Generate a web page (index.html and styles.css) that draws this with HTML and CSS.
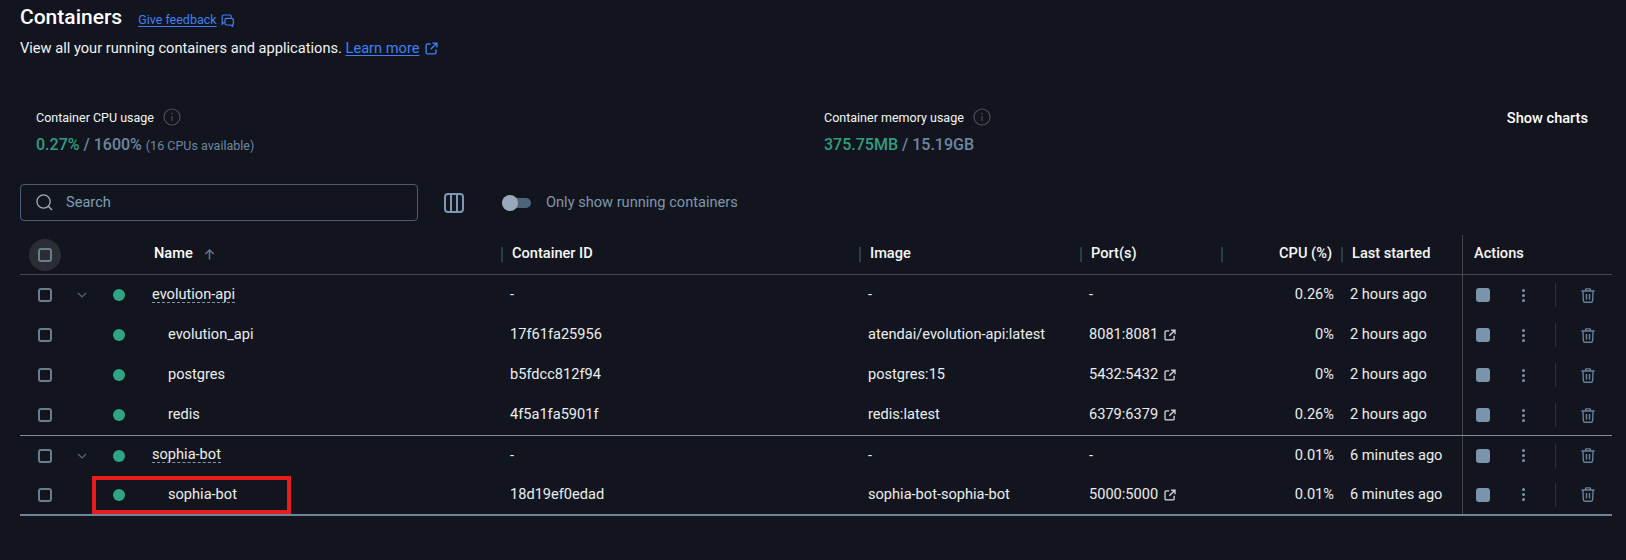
FILE: index.html
```html
<!DOCTYPE html>
<html lang="en">
<head>
<meta charset="utf-8">
<title>Containers</title>
<link rel="stylesheet" href="styles.css">
</head>
<body>
<svg class="defs" aria-hidden="true">
  <symbol id="ext" viewBox="0 0 14 14"><path d="M6 2.200H2.600A1.400 1.400 0 0 0 1.200 3.600v7.800a1.400 1.400 0 0 0 1.400 1.400h7.800a1.400 1.400 0 0 0 1.400-1.400V8M8 1.200h4.800V6M12.600 1.400 6.200 7.800" fill="none" stroke="currentColor" stroke-width="1.500"/></symbol>
  <symbol id="trash" viewBox="0 0 14 15"><path d="M.5 3h13M4.600 3V1.600c0-.4.3-.7.7-.7h3.400c.4 0 .7.3.7.7V3M1.900 3l.5 9.800c0 .8.6 1.400 1.400 1.400h6.400c.8 0 1.400-.6 1.400-1.400l.5-9.800M5.500 6v5.400M8.500 6v5.400" fill="none" stroke="currentColor" stroke-width="1.400"/></symbol>
  <symbol id="chev" viewBox="0 0 10 6"><path d="M1 1l4 4 4-4" fill="none" stroke="currentColor" stroke-width="1.200"/></symbol>
  <symbol id="info" viewBox="0 0 18 18"><circle cx="9" cy="9" r="8" fill="none" stroke="currentColor" stroke-width="1.200"/><path d="M9 8v5" stroke="currentColor" stroke-width="1.200"/><circle cx="9" cy="5.600" r=".8" fill="currentColor"/></symbol>
</svg>

<main class="page">
  <header class="title-row">
    <h1 class="title">Containers</h1>
    <a class="feedback link" href="#">Give feedback</a>
    <svg class="feedback-icon" viewBox="0 0 13 13"><path d="M3.500 8.500H2.700L1.200 10V2.500A1.500 1.500 0 0 1 2.700 1h6A1.500 1.500 0 0 1 10.200 2.500V3.800" fill="none" stroke="currentColor" stroke-width="1.200"/><path d="M5.500 4.300h5.300a1.500 1.500 0 0 1 1.500 1.500v3.700a1.500 1.500 0 0 1-.6 1.200v1.800l-1.800-1.500H5.500A1.500 1.500 0 0 1 4 9.500V5.800a1.500 1.500 0 0 1 1.500-1.500z" fill="none" stroke="currentColor" stroke-width="1.200"/></svg>
  </header>
  <p class="subtitle">View all your running containers and applications. <a class="link" href="#">Learn more</a><svg class="learn-icon"><use href="#ext"/></svg></p>

  <section class="stats">
    <div class="stat">
      <div class="stat-label">Container CPU usage<svg class="info"><use href="#info"/></svg></div>
      <div class="stat-value"><span class="green">0.27%</span> / 1600% <small class="stat-note">(16 CPUs available)</small></div>
    </div>
    <div class="stat">
      <div class="stat-label">Container memory usage<svg class="info"><use href="#info"/></svg></div>
      <div class="stat-value"><span class="green">375.75MB</span> / 15.19GB</div>
    </div>
    <button class="show-charts">Show charts</button>
  </section>

  <section class="toolbar">
    <label class="search">
      <svg class="search-icon" viewBox="0 0 18 18"><circle cx="8" cy="8" r="7" fill="none" stroke="currentColor" stroke-width="1.400"/><path d="M13 13l4 4" stroke="currentColor" stroke-width="1.400" fill="none"/></svg>
      <span class="search-text">Search</span>
    </label>
    <svg class="columns-icon" viewBox="0 0 20 20"><rect x="1" y="1" width="18" height="18" rx="3" fill="none" stroke="currentColor" stroke-width="2"/><path d="M7 1v18M13 1v18" stroke="currentColor" stroke-width="2"/></svg>
    <span class="toggle"><span class="thumb"></span></span>
    <span class="toggle-label">Only show running containers</span>
  </section>

  <section class="table">
    <div class="row head">
      <div class="cell"><span class="head-check"><span class="check"></span></span></div>
      <div class="cell"></div>
      <div class="cell"></div>
      <div class="cell name-head">Name<svg class="sort" viewBox="0 0 12 12"><path d="M6 11.500V1M1.500 5.500 6 1l4.500 4.500" fill="none" stroke="currentColor" stroke-width="1.600"/></svg></div>
      <div class="cell hcell"><i class="sep"></i>Container ID</div>
      <div class="cell hcell"><i class="sep"></i>Image</div>
      <div class="cell hcell"><i class="sep"></i>Port(s)</div>
      <div class="cell hcell"><i class="sep"></i><span class="cpu-title">CPU (%)</span></div>
      <div class="cell hcell"><i class="sep"></i>Last started</div>
      <div class="cell actions actions-head">Actions</div>
    </div>

    <div class="row">
      <div class="cell"><span class="check"></span></div>
      <div class="cell"><svg class="chev"><use href="#chev"/></svg></div>
      <div class="cell"><span class="dot"></span></div>
      <div class="cell name group"><span class="dashed">evolution-api</span></div>
      <div class="cell text">-</div>
      <div class="cell text">-</div>
      <div class="cell text">-</div>
      <div class="cell cpu">0.26%</div>
      <div class="cell started">2 hours ago</div>
      <div class="cell actions"><span class="stop"></span><span class="kebab"><i></i><i></i><i></i></span><span class="act-sep"></span><svg class="trash"><use href="#trash"/></svg></div>
    </div>

    <div class="row">
      <div class="cell"><span class="check"></span></div>
      <div class="cell"></div>
      <div class="cell"><span class="dot"></span></div>
      <div class="cell name">evolution_api</div>
      <div class="cell text">17f61fa25956</div>
      <div class="cell text">atendai/evolution-api:latest</div>
      <div class="cell text">8081:8081<svg class="port-icon"><use href="#ext"/></svg></div>
      <div class="cell cpu">0%</div>
      <div class="cell started">2 hours ago</div>
      <div class="cell actions"><span class="stop"></span><span class="kebab"><i></i><i></i><i></i></span><span class="act-sep"></span><svg class="trash"><use href="#trash"/></svg></div>
    </div>

    <div class="row">
      <div class="cell"><span class="check"></span></div>
      <div class="cell"></div>
      <div class="cell"><span class="dot"></span></div>
      <div class="cell name">postgres</div>
      <div class="cell text">b5fdcc812f94</div>
      <div class="cell text">postgres:15</div>
      <div class="cell text">5432:5432<svg class="port-icon"><use href="#ext"/></svg></div>
      <div class="cell cpu">0%</div>
      <div class="cell started">2 hours ago</div>
      <div class="cell actions"><span class="stop"></span><span class="kebab"><i></i><i></i><i></i></span><span class="act-sep"></span><svg class="trash"><use href="#trash"/></svg></div>
    </div>

    <div class="row group-end">
      <div class="cell"><span class="check"></span></div>
      <div class="cell"></div>
      <div class="cell"><span class="dot"></span></div>
      <div class="cell name">redis</div>
      <div class="cell text">4f5a1fa5901f</div>
      <div class="cell text">redis:latest</div>
      <div class="cell text">6379:6379<svg class="port-icon"><use href="#ext"/></svg></div>
      <div class="cell cpu">0.26%</div>
      <div class="cell started">2 hours ago</div>
      <div class="cell actions"><span class="stop"></span><span class="kebab"><i></i><i></i><i></i></span><span class="act-sep"></span><svg class="trash"><use href="#trash"/></svg></div>
    </div>

    <div class="row short">
      <div class="cell"><span class="check"></span></div>
      <div class="cell"><svg class="chev"><use href="#chev"/></svg></div>
      <div class="cell"><span class="dot"></span></div>
      <div class="cell name group"><span class="dashed">sophia-bot</span></div>
      <div class="cell text">-</div>
      <div class="cell text">-</div>
      <div class="cell text">-</div>
      <div class="cell cpu">0.01%</div>
      <div class="cell started">6 minutes ago</div>
      <div class="cell actions"><span class="stop"></span><span class="kebab"><i></i><i></i><i></i></span><span class="act-sep"></span><svg class="trash"><use href="#trash"/></svg></div>
    </div>

    <div class="row last">
      <div class="cell"><span class="check"></span></div>
      <div class="cell"></div>
      <div class="cell"><span class="dot"></span></div>
      <div class="cell name">sophia-bot</div>
      <div class="cell text">18d19ef0edad</div>
      <div class="cell text">sophia-bot-sophia-bot</div>
      <div class="cell text">5000:5000<svg class="port-icon"><use href="#ext"/></svg></div>
      <div class="cell cpu">0.01%</div>
      <div class="cell started">6 minutes ago</div>
      <div class="cell actions"><span class="stop"></span><span class="kebab"><i></i><i></i><i></i></span><span class="act-sep"></span><svg class="trash"><use href="#trash"/></svg></div>
    </div>

    <div class="highlight"></div>
  </section>
</main>
</body>
</html>
```
FILE: styles.css
```css
* { box-sizing: border-box; }
html, body { margin: 0; height: 100%; }
body {
  background: #12151d;
  color: #eceef0;
  font-family: Roboto, "Liberation Sans", sans-serif;
  font-size: 14.600px;
  overflow: hidden;
}
.defs { width: 0; height: 0; position: absolute; }
.page { width: 1626px; height: 560px; padding: 0 38px 0 20px; }

.link { color: #4080f6; text-decoration: underline; text-underline-offset: 2px; }

.title-row { display: flex; align-items: center; height: 34px; }
.title { margin: 0; font-size: 21px; font-weight: 500; color: #fff; line-height: 34px; }
.feedback { margin-left: 16px; font-size: 12.500px; margin-top: 4px; }
.feedback-icon { width: 13px; height: 13px; margin: 6px 0 0 4px; color: #4080f6; }

.subtitle { margin: 4px 0 0; height: 20px; line-height: 20px; font-size: 14.630px; color: #f1f3f5; }
.learn-icon { width: 13px; height: 13px; margin-left: 5px; vertical-align: -2px; color: #4080f6; }

.stats {
  display: grid;
  grid-template-columns: 788px 1fr auto;
  margin-top: 50px;
  padding-left: 16px;
  height: 50px;
}
.stat-label { display: flex; align-items: center; height: 18px; font-size: 12.500px; color: #f4f5f7; }
.info { width: 18px; height: 18px; margin-left: 9px; color: #4c4f54; }
.stat-value { margin-top: 9px; font-size: 16px; font-weight: 500; line-height: 20px; color: #6d87a3; }
.green { color: #2f9e80; }
.stat-note { font-size: 12.500px; font-weight: 400; }
.show-charts {
  align-self: start;
  margin-top: 1px;
  padding: 0;
  border: 0;
  background: none;
  color: #fff;
  font: 500 14.600px Roboto, sans-serif;
}

.toolbar { display: flex; align-items: center; margin-top: 26px; height: 37px; }
.search {
  display: flex;
  align-items: center;
  width: 398px;
  height: 37px;
  padding-left: 15px;
  border: 1px solid #4a6078;
  border-radius: 4px;
}
.search-icon { width: 17px; height: 17px; color: #9fb0c2; }
.search-text { margin: 0 0 1px 13px; color: #7f9dbb; }
.columns-icon { width: 20px; height: 20px; margin-left: 26px; color: #7f97b0; }
.toggle {
  position: relative;
  width: 29px;
  height: 10px;
  margin-left: 38px;
  border-radius: 5px;
  background: #4f6379;
}
.thumb {
  position: absolute;
  left: 0;
  top: -3px;
  width: 16px;
  height: 16px;
  border-radius: 50%;
  background: #98a9bb;
}
.toggle-label { margin: 0 0 1px 15px; color: #7f97b0; }

.table { position: relative; width: 1592px; margin-top: 14px; }
.row {
  display: grid;
  grid-template-columns: 50px 24px 50px 358px 358px 221px 141px 120px 120px 150px;
  height: 40px;
}
.row.head { border-bottom: 1px solid #45474a; }
.row.group-end { height: 41px; border-bottom: 1px solid #7a8ea3; }
.row.short { height: 39px; }
.row.last { height: 41px; border-bottom: 2px solid #6f8599; }
.cell { display: flex; align-items: center; min-width: 0; white-space: nowrap; }
.row > .cell:nth-child(-n+3) { justify-content: center; }

.check {
  display: block;
  width: 14px;
  height: 14px;
  border: 2px solid #6c7c8e;
  border-radius: 3px;
}
.head-check {
  display: flex;
  align-items: center;
  justify-content: center;
  width: 32px;
  height: 32px;
  border-radius: 50%;
  background: #2a2e34;
}
.chev { width: 10px; height: 6px; color: #56677a; }
.dot { width: 12px; height: 12px; border-radius: 50%; background: #2fa586; }

.name-head { padding: 0 0 4px 10px; color: #fff; font-weight: 500; }
.sort { width: 11px; height: 11px; margin: 4px 0 0 11px; color: #5f7893; }
.hcell { color: #f7f8f9; font-weight: 500; padding: 0 10px 4px 0; }
.sep { display: block; width: 2px; height: 15px; margin: 4px 9px 0 -1px; background: #2d3b4a; }
.cpu-title { margin-left: auto; }

.name { padding: 0 0 2px 24px; }
.name.group { padding-left: 8px; }
.dashed { border-bottom: 1px dashed #7f97b0; line-height: 16px; }
.text { padding: 0 0 2px 8px; }
.port-icon { width: 12px; height: 12px; margin: 2px 0 0 6px; color: #d9dde1; }
.cpu { justify-content: flex-end; padding: 0 8px 2px 0; }
.started { padding: 0 0 2px 8px; }

.actions { padding-left: 13px; border-left: 1px solid #43474b; }
.actions-head { padding: 0 0 4px 11px; color: #f7f8f9; font-weight: 500; }
.stop { display: block; width: 14px; height: 14px; border-radius: 3px; background: #7b94ad; }
.kebab { display: flex; flex-direction: column; align-items: center; gap: 2px; width: 18px; margin-left: 24px; }
.kebab i { display: block; width: 3px; height: 3px; border-radius: 50%; background: #7b94ad; }
.act-sep { display: block; width: 1px; height: 24px; margin-left: 23px; background: #2b3038; }
.trash { width: 14px; height: 15px; margin-left: 25px; color: #6a8098; }

.highlight {
  position: absolute;
  left: 72px;
  top: 241px;
  width: 199px;
  height: 38px;
  border: 4px solid #e81c1c;
}
```
